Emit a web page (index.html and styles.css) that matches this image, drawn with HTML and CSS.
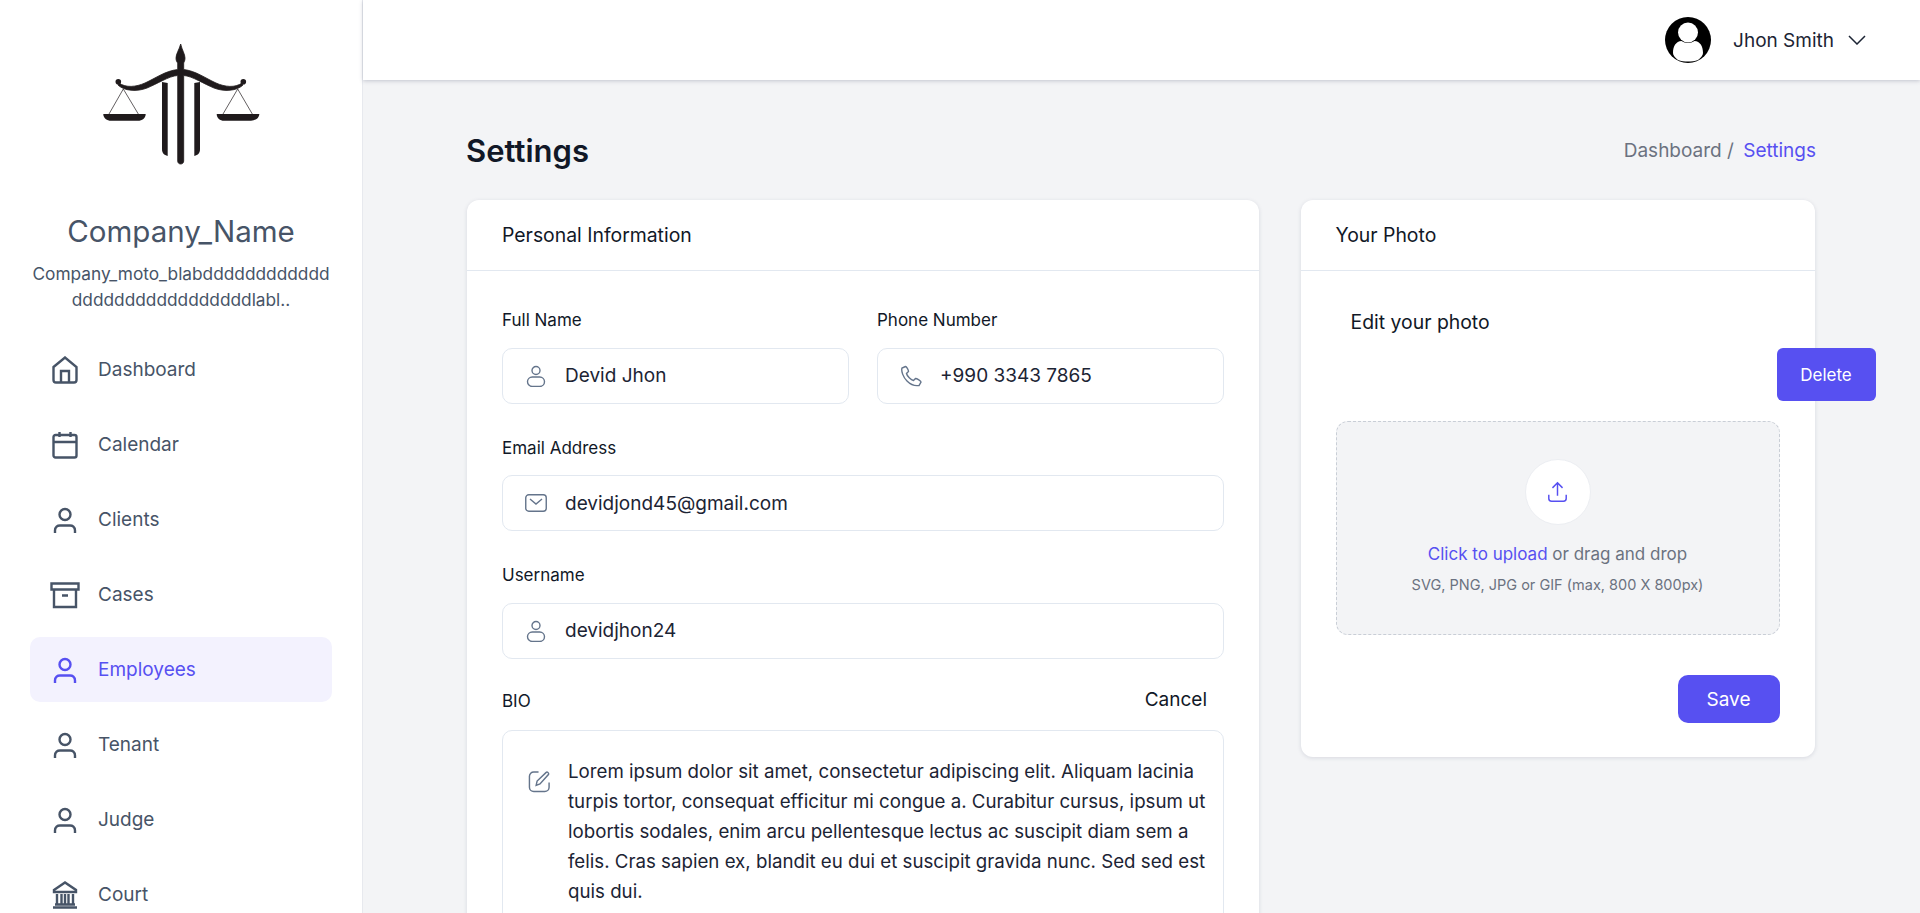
FILE: index.html
```html
<!DOCTYPE html>
<html lang="en">
<head>
  <meta charset="UTF-8" />
  <title>Settings</title>
  <link rel="stylesheet" href="styles.css">
</head>
<body>
  <div class="app">
    <aside class="sidebar">
      <svg class="logo" viewBox="1 0 180 150" fill="#1f1a1c">
        <path stroke="#1f1a1c" stroke-width="0.800" d="M90.700 14 C92 20 95 24 95 28 C95 31 94 32 93.700 33 L93.700 39.500 C106 41 115 48 126 53 C135 57 145 58 152 53 L153 55 C147 61 134 62 124 58 C114 54 102 46 93.700 45.500 L93.700 131 C93.700 135 87.700 135 87.700 131 L87.700 45.500 C79 46 67 54 57 58 C47 62 34 61 28 55 L29 53 C36 58 46 57 55 53 C66 48 75 41 87.700 39.500 L87.700 33 C87 32 86 31 86 28 C86 24 89 20 90.700 14 Z"/>
        <circle cx="28.300" cy="51.700" r="2.800"/>
        <circle cx="153.300" cy="51.700" r="2.800"/>
        <path d="M72 52 L77.700 53 L77.700 126 C74 125 72 123 72 119 Z"/>
        <path d="M110 52 L104.300 53 L104.300 126 C108 125 110 123 110 119 Z"/>
        <path d="M33.300 59 L19 84 M33.300 59 L48.300 84 M147.700 59 L133 84 M147.700 59 L162.300 84" stroke="#1f1a1c" stroke-width="0.700" fill="none"/>
        <path d="M13.300 84 L55.700 84 C55.700 88 52 90.800 48 90.800 L21 90.800 C17 90.800 13.300 88 13.300 84 Z"/>
        <path d="M126.700 84 L169.300 84 C169.300 88 165 90.800 161 90.800 L134 90.800 C130 90.800 126.700 88 126.700 84 Z"/>
      </svg>
      <div class="company-name">Company_Name</div>
      <div class="company-moto">Company_moto_blabdddddddddddd<br>dddddddddddddddddlabl..</div>

      <nav class="menu">
        <a class="menu-item">
          <svg class="menu-icon" viewBox="0 0 26 28"><path d="M1.500 11 L13 1.500 L24.500 11 V24 A2.500 2.500 0 0 1 22 26.500 H4 A2.500 2.500 0 0 1 1.500 24 Z"/><path d="M9 26.500 V15 H17 V26.500"/></svg>
          Dashboard
        </a>
        <a class="menu-item">
          <svg class="menu-icon" viewBox="0 0 26 28"><rect x="1.500" y="4" width="23" height="22.500" rx="2"/><path d="M1.500 11 H24.500 M7.500 1 V6 M18.500 1 V6"/></svg>
          Calendar
        </a>
        <a class="menu-item">
          <svg class="menu-icon" viewBox="0 0 26 28"><circle cx="13" cy="8.500" r="5.500"/><path d="M3 27 V24.500 C3 21 5.500 19.500 8 19.500 H18 C20.500 19.500 23 21 23 24.500 V27"/></svg>
          Clients
        </a>
        <a class="menu-item">
          <svg class="menu-icon menu-icon-wide" viewBox="0 0 30 28"><path d="M1.500 2.500 H28.500 V8.500 H1.500 Z"/><path d="M4 8.500 V26 H26 V8.500 M12 14.500 H18"/></svg>
          Cases
        </a>
        <a class="menu-item active">
          <svg class="menu-icon" viewBox="0 0 26 28"><circle cx="13" cy="8.500" r="5.500"/><path d="M3 27 V24.500 C3 21 5.500 19.500 8 19.500 H18 C20.500 19.500 23 21 23 24.500 V27"/></svg>
          Employees
        </a>
        <a class="menu-item">
          <svg class="menu-icon" viewBox="0 0 26 28"><circle cx="13" cy="8.500" r="5.500"/><path d="M3 27 V24.500 C3 21 5.500 19.500 8 19.500 H18 C20.500 19.500 23 21 23 24.500 V27"/></svg>
          Tenant
        </a>
        <a class="menu-item">
          <svg class="menu-icon" viewBox="0 0 26 28"><circle cx="13" cy="8.500" r="5.500"/><path d="M3 27 V24.500 C3 21 5.500 19.500 8 19.500 H18 C20.500 19.500 23 21 23 24.500 V27"/></svg>
          Judge
        </a>
        <a class="menu-item">
          <svg class="menu-icon" viewBox="0 0 26 28"><path d="M2 9 L13 1.500 L24 9 V11 H2 Z"/><path d="M5 13 V23 M9.500 13 V23 M13 13 V23 M16.500 13 V23 M21 13 V23 M3 23.500 H23 M1 26.500 H25"/></svg>
          Court
        </a>
      </nav>
    </aside>

    <div class="main">
      <header class="topbar">
        <svg class="avatar" viewBox="0 0 46 46">
          <circle cx="23" cy="23" r="23" fill="#000"/>
          <circle cx="23" cy="15.500" r="10" fill="#fff"/>
          <path d="M8 36 C8 29 11 24.500 16.500 24 C20 26.500 26 26.500 29.500 24 C35 24.500 38 29 38 36 C38 38 36 41 33 43 C27 45 19 45 13 43 C10 41 8 38 8 36 Z" fill="#fff"/>
        </svg>
        <span class="user-name">Jhon Smith</span>
        <svg class="chevron" viewBox="0 0 18 10"><path d="M1 1 L9 9 L17 1"/></svg>
      </header>

      <main class="content">
        <div class="page-head">
          <h1>Settings</h1>
          <div class="breadcrumb">Dashboard / <span class="crumb-current">Settings</span></div>
        </div>

        <div class="columns">
          <section class="card">
            <div class="card-title">Personal Information</div>
            <div class="card-body form-body">
              <div class="field-row">
                <div class="field">
                  <label>Full Name</label>
                  <div class="input">
                    <svg class="input-icon" viewBox="0 0 22 22"><circle cx="11" cy="5.500" r="4"/><rect x="2.500" y="12" width="17" height="9.500" rx="4.750"/></svg>
                    Devid Jhon
                  </div>
                </div>
                <div class="field">
                  <label>Phone Number</label>
                  <div class="input">
                    <svg class="input-icon" viewBox="0 0 22 22"><path d="M5.500 1.500 L2 3 C1 6 3 12 7 16 C11 20 16 21 19 20.500 L21 17 C21 16 17 13.500 15.500 13.500 L13.500 15.500 C11 15 7 11 6.500 8.500 L8.500 6.500 C8.500 5 6.500 1.500 5.500 1.500 Z"/></svg>
                    +990 3343 7865
                  </div>
                </div>
              </div>
              <div class="field">
                <label>Email Address</label>
                <div class="input">
                  <svg class="input-icon" viewBox="0 0 22 18"><rect x="0.750" y="0.750" width="20.500" height="16.500" rx="3"/><path d="M5 5 L11 10 L17 5"/></svg>
                  devidjond45@gmail.com
                </div>
              </div>
              <div class="field">
                <label>Username</label>
                <div class="input">
                  <svg class="input-icon" viewBox="0 0 22 22"><circle cx="11" cy="5.500" r="4"/><rect x="2.500" y="12" width="17" height="9.500" rx="4.750"/></svg>
                  devidjhon24
                </div>
              </div>
              <div class="field">
                <div class="bio-head">
                  <label>BIO</label>
                  <span class="cancel">Cancel</span>
                </div>
                <div class="bio-box">
                  <svg class="bio-icon" viewBox="0 0 24 24"><path d="M11 2 H6 A4.500 4.500 0 0 0 1.500 6.500 V18 A4.500 4.500 0 0 0 6 22.500 H17.500 A4.500 4.500 0 0 0 22 18 V13"/><path d="M19 2.500 C20 1.500 22 3 21.500 4.500 L12.500 14.500 L8.500 16 L9.500 11.500 Z"/></svg>
                  <p class="bio-text">Lorem ipsum dolor sit amet, consectetur adipiscing elit. Aliquam lacinia turpis tortor, consequat efficitur mi congue a. Curabitur cursus, ipsum ut lobortis sodales, enim arcu pellentesque lectus ac suscipit diam sem a felis. Cras sapien ex, blandit eu dui et suscipit gravida nunc. Sed sed est quis dui.</p>
                </div>
              </div>
            </div>
          </section>

          <section class="card photo-card">
            <div class="card-title">Your Photo</div>
            <div class="card-body photo-body">
              <div class="edit-label">Edit your photo</div>
              <div class="delete-row"><button class="btn btn-delete">Delete</button></div>
              <div class="dropzone">
                <div class="upload-circle">
                  <svg class="upload-icon" viewBox="0 0 22 24"><path d="M11 16 V2 M5.500 7.500 L11 2 L16.500 7.500 M1.500 15 V19 A3 3 0 0 0 4.500 22 H17.500 A3 3 0 0 0 20.500 19 V15"/></svg>
                </div>
                <div class="drop-text"><span class="drop-link">Click to upload</span> or drag and drop</div>
                <div class="drop-hint">SVG, PNG, JPG or GIF (max, 800 X 800px)</div>
              </div>
              <div class="save-row"><button class="btn btn-save">Save</button></div>
            </div>
          </section>
        </div>
      </main>
    </div>
  </div>
</body>
</html>
```

FILE: styles.css
```css
* {
  box-sizing: border-box;
}
html, body {
  height: 100%;
}
body {
  margin: 0;
  overflow: hidden;
  font-family: "Inter", "Liberation Sans", sans-serif;
  background-color: #f3f4f6;
  color: #1c2434;
}
.app {
  display: flex;
  height: 913px;
  overflow: hidden;
}

/* sidebar */
.sidebar {
  width: 363px;
  flex-shrink: 0;
  background-color: #fff;
  border-right: 1px solid #e7e9ee;
  padding: 30px 30px 0;
  color: #475467;
}
.logo {
  display: block;
  width: 180px;
  height: 150px;
  margin: 0 auto;
}
.company-name {
  margin-top: 31px;
  font-size: 29.500px;
  line-height: 40px;
  text-align: center;
}
.company-moto {
  margin: 10px -8px 0;
  font-size: 17.300px;
  line-height: 26px;
  text-align: center;
  white-space: nowrap;
}
.menu {
  margin-top: 24px;
  display: flex;
  flex-direction: column;
  gap: 10px;
}
.menu-item {
  display: flex;
  align-items: center;
  height: 65px;
  padding-left: 22px;
  gap: 20px;
  border-radius: 10px;
  font-size: 19px;
}
.menu-item.active {
  background-color: #f3f2fe;
  color: #5750f1;
}
.menu-icon {
  width: 26px;
  height: 28px;
  flex-shrink: 0;
  fill: none;
  stroke: currentColor;
  stroke-width: 2.400;
}
.menu-icon-wide {
  width: 30px;
  margin: 0 -2px;
}

/* top bar */
.main {
  flex: 1;
  min-width: 0;
}
.topbar {
  height: 80px;
  background-color: #fff;
  box-shadow: 0 1px 4px rgba(50, 60, 90, 0.25);
  display: flex;
  align-items: center;
  justify-content: flex-end;
  padding-right: 54px;
}
.avatar {
  width: 46px;
  height: 46px;
}
.user-name {
  margin-left: 22px;
  font-size: 19px;
}
.chevron {
  width: 18px;
  height: 10px;
  margin-left: 14px;
  fill: none;
  stroke: #1c2434;
  stroke-width: 1.500;
}

/* page */
.content {
  padding: 51px 104px 0 103px;
}
.page-head {
  display: flex;
  align-items: center;
  justify-content: space-between;
  height: 38px;
  margin-bottom: 31px;
}
h1 {
  margin: 0;
  font-size: 31px;
  font-weight: 600;
  color: #111827;
}
.breadcrumb {
  font-size: 19px;
  color: #6b7280;
}
.crumb-current {
  margin-left: 4px;
  color: #5750f1;
}
.columns {
  display: grid;
  grid-template-columns: 792px 514px;
  gap: 41.500px;
  margin-left: 1px;
  align-items: start;
}
.card {
  background-color: #fff;
  border-radius: 12px;
  box-shadow: 0 1px 4px rgba(50, 60, 90, 0.14);
}
.card-title {
  height: 71px;
  padding: 0 35px;
  display: flex;
  align-items: center;
  border-bottom: 1px solid #e2e8f0;
  font-size: 19.400px;
  font-weight: 400;
  color: #111827;
}

/* personal form */
.form-body {
  padding: 36px 35px 30px;
  display: flex;
  flex-direction: column;
  gap: 31px;
}
.field-row {
  display: grid;
  grid-template-columns: 1fr 1fr;
  gap: 28px;
}
label {
  display: block;
  height: 26px;
  line-height: 26px;
  margin-bottom: 14.500px;
  font-size: 17px;
  font-weight: 400;
  color: #111827;
}
.input {
  display: flex;
  align-items: center;
  height: 56px;
  padding: 0 22px;
  gap: 18px;
  border: 1px solid #e2e8f0;
  border-radius: 10px;
  font-size: 19px;
}
.input-icon {
  width: 22px;
  height: 22px;
  flex-shrink: 0;
  fill: none;
  stroke: #64748b;
  stroke-width: 1.400;
}
.bio-head {
  display: flex;
  justify-content: space-between;
  margin-top: -2px;
}
.bio-head label {
  margin-bottom: 16.500px;
}
.cancel {
  margin-right: 17px;
  font-size: 19px;
  color: #111827;
}
.bio-box {
  display: flex;
  gap: 17px;
  padding: 26px 10px 30px 25px;
  border: 1px solid #e2e8f0;
  border-radius: 10px;
}
.bio-icon {
  width: 23px;
  height: 23px;
  margin-top: 13px;
  flex-shrink: 0;
  fill: none;
  stroke: #64748b;
  stroke-width: 1.500;
}
.bio-text {
  margin: 0;
  font-size: 18.700px;
  line-height: 30px;
}

/* photo card */
.photo-body {
  padding: 36px 35px 34px;
}
.edit-label {
  padding-left: 15px;
  height: 30px;
  line-height: 30px;
  font-size: 19.400px;
  color: #111827;
}
.delete-row {
  display: flex;
  justify-content: flex-end;
  margin: 11px -96px 20px 0;
}
.btn {
  border: none;
  color: #fff;
  background-color: #5750f1;
  font-family: inherit;
  border-radius: 6px;
}
.btn-delete {
  width: 99px;
  height: 53px;
  font-size: 17px;
}
.dropzone {
  height: 214px;
  background-color: #f3f4f6;
  border: 1px dashed #c9ced6;
  border-radius: 12px;
  display: flex;
  flex-direction: column;
  align-items: center;
  padding-top: 37px;
}
.upload-circle {
  width: 66px;
  height: 66px;
  border-radius: 50%;
  background-color: #fff;
  border: 1px solid #eceef2;
  display: flex;
  align-items: center;
  justify-content: center;
}
.upload-icon {
  width: 21px;
  height: 22px;
  fill: none;
  stroke: #5750f1;
  stroke-width: 1.600;
}
.drop-text {
  margin-top: 16px;
  font-size: 17px;
  line-height: 26px;
  color: #6b7280;
}
.drop-link {
  color: #5750f1;
}
.drop-hint {
  margin-top: 7px;
  font-size: 14.500px;
  line-height: 22px;
  color: #6b7280;
}
.save-row {
  display: flex;
  justify-content: flex-end;
  margin-top: 40px;
}
.btn-save {
  width: 102px;
  height: 48px;
  border-radius: 10px;
  font-size: 19px;
}
```
